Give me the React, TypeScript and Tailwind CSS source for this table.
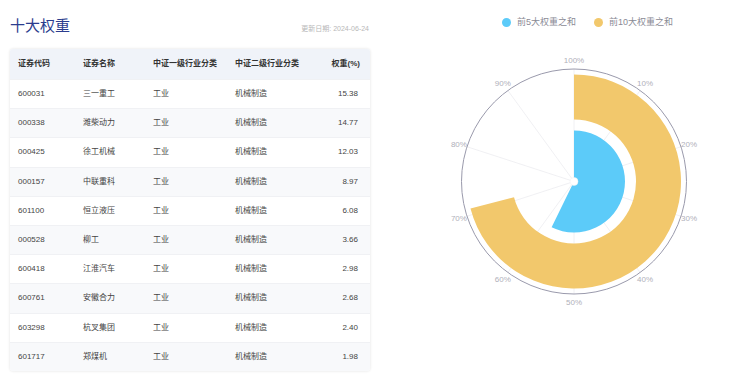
import React from "react";

const rows = [
  ["600031", "三一重工", "15.38"],
  ["000338", "潍柴动力", "14.77"],
  ["000425", "徐工机械", "12.03"],
  ["000157", "中联重科", "8.97"],
  ["601100", "恒立液压", "6.08"],
  ["000528", "柳工", "3.66"],
  ["600418", "江淮汽车", "2.98"],
  ["600761", "安徽合力", "2.68"],
  ["603298", "杭叉集团", "2.40"],
  ["601717", "郑煤机", "1.98"],
];

const CX = 204;
const CY = 136.5;

function pt(r: number, deg: number) {
  const a = (deg * Math.PI) / 180;
  return [CX + r * Math.sin(a), CY - r * Math.cos(a)];
}

function sector(r0: number, r1: number, deg: number) {
  const large = deg > 180 ? 1 : 0;
  const [ox0, oy0] = pt(r1, 0);
  const [ox1, oy1] = pt(r1, deg);
  if (r0 <= 0) {
    return `M ${CX} ${CY} L ${ox0} ${oy0} A ${r1} ${r1} 0 ${large} 1 ${ox1} ${oy1} Z`;
  }
  const [ix0, iy0] = pt(r0, 0);
  const [ix1, iy1] = pt(r0, deg);
  return `M ${ix0} ${iy0} L ${ox0} ${oy0} A ${r1} ${r1} 0 ${large} 1 ${ox1} ${oy1} L ${ix1} ${iy1} A ${r0} ${r0} 0 ${large} 0 ${ix0} ${iy0} Z`;
}

function Chart() {
  const ticks = Array.from({ length: 10 }, (_, i) => i);
  return (
    <svg width="360" height="332" className="block">
      {ticks.map((i) => {
        const [x, y] = pt(112.5, i * 36);
        return <line key={i} x1={CX} y1={CY} x2={x} y2={y} stroke="#ececf0" strokeWidth="0.8" />;
      })}
      <circle cx={CX} cy={CY} r="112.5" fill="none" stroke="#9a9aac" strokeWidth="1" />
      <path d={sector(62, 107, 255.35)} fill="#f2c86c" />
      <path d={sector(0, 51, 206.03)} fill="#5ccbf9" />
      <circle cx={CX} cy={CY} r="4" fill="#ffffff" stroke="#eeeeee" strokeWidth="0.5" />
      {ticks.map((i) => {
        const [x, y] = pt(121, i * 36);
        const label = i === 0 ? "100%" : `${i * 10}%`;
        return (
          <text
            key={i}
            x={x}
            y={y}
            textAnchor="middle"
            dominantBaseline="central"
            fontSize="8"
            fill="#b0b0ba"
            fontFamily='"Liberation Sans", sans-serif'
          >
            {label}
          </text>
        );
      })}
    </svg>
  );
}

export default function App() {
  return (
    <div
      className="w-[730px] h-[378px] flex bg-white overflow-hidden"
      style={{ fontFamily: '"Liberation Sans", "Noto Sans CJK SC", sans-serif' }}
    >
      <div className="w-[370px] pl-[10px] pt-[14px]">
        <div className="flex items-end justify-between h-[23px] w-[360px]">
          <div className="text-[15px] leading-[23px] text-[#2b3d8e]">十大权重</div>
          <div className="text-[7px] leading-[10px] mb-[3px] text-[#b8b8b8] pr-[1px]">更新日期: 2024-06-24</div>
        </div>
        <div className="mt-[12px] w-[360px] rounded-[3px] overflow-hidden shadow-[0_0_3px_rgba(0,0,0,0.12)] text-[8px]">
          <div className="flex items-center h-[30px] bg-[#f0f3f9] font-bold text-[#333]">
            <div className="w-[73px] pl-[8px]">证券代码</div>
            <div className="w-[70px]">证券名称</div>
            <div className="w-[82px]">中证一级行业分类</div>
            <div className="flex-1">中证二级行业分类</div>
            <div className="pr-[10px] text-right">权重(%)</div>
          </div>
          {rows.map((r, i) => (
            <div
              key={r[0]}
              className={
                "flex items-center h-[29.2px] text-[#444] border-t border-[#f0f1f4] " +
                (i % 2 === 0 ? "bg-white" : "bg-[#f8f9fb]")
              }
            >
              <div className="w-[73px] pl-[8px]">{r[0]}</div>
              <div className="w-[70px]">{r[1]}</div>
              <div className="w-[82px]">工业</div>
              <div className="flex-1">机械制造</div>
              <div className="pr-[12px] text-right">{r[2]}</div>
            </div>
          ))}
        </div>
      </div>
      <div className="flex-1 flex flex-col">
        <div className="h-[45px] flex items-center pl-[132px] text-[9px] text-[#8a8a95]">
          <span className="w-[9px] h-[9px] rounded-full bg-[#5ccbf9]" />
          <span className="ml-[6px]">前5大权重之和</span>
          <span className="ml-[18px] w-[9px] h-[9px] rounded-full bg-[#f2c86c]" />
          <span className="ml-[6px]">前10大权重之和</span>
        </div>
        <Chart />
      </div>
    </div>
  );
}
